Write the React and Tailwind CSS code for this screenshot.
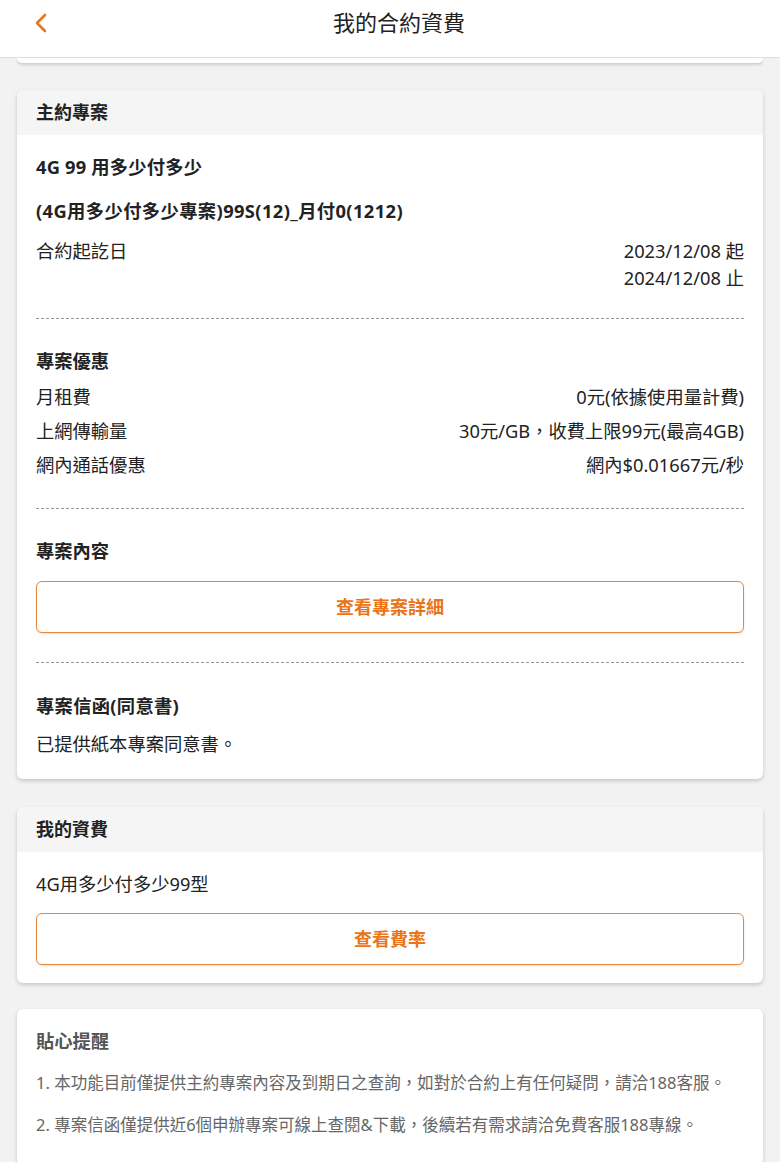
import React from "react";

const font = { fontFamily: '"Noto Sans", "Noto Sans CJK TC", sans-serif' };

const Dashed = ({ className = "" }) => (
  <div className={`border-t border-dashed border-[#9a9a9a] ${className}`} />
);

const OrangeButton = ({ children, className = "" }) => (
  <button
    className={`w-full h-[52px] rounded-md border border-[#e8863a] bg-white text-[18px] font-bold text-[#ea7417] shadow-[0_1px_2px_rgba(0,0,0,0.12)] ${className}`}
  >
    {children}
  </button>
);

const Row = ({ label, value }) => (
  <div className="flex justify-between leading-[27px]">
    <span>{label}</span>
    <span>{value}</span>
  </div>
);

const Card = ({ title, children, className = "" }) => (
  <section
    className={`mx-[17px] bg-white rounded-md overflow-hidden shadow-[0_2px_4px_rgba(0,0,0,0.18)] ${className}`}
  >
    {title && (
      <div className="h-[45px] bg-[#f5f5f5] px-[19px] flex items-center text-[18px] font-bold text-[#222]">
        {title}
      </div>
    )}
    {children}
  </section>
);

export default function App() {
  return (
    <div
      className="min-h-[1162px] bg-[#f2f2f2] text-[18.3px] text-[#222]"
      style={font}
    >
      <header className="h-[58px] bg-white border-b border-[#dedede] relative flex items-center justify-center">
        <button className="absolute left-[32px] top-[11px] w-[18px] h-[24px] flex items-center justify-center">
          <svg width="14" height="20" viewBox="0 0 14 20" fill="none">
            <polyline
              points="11,2 3,10 11,18"
              stroke="#e8761d"
              strokeWidth="2.6"
              strokeLinecap="round"
              strokeLinejoin="round"
            />
          </svg>
        </button>
        <h1 className="text-[22px] text-[#222] -mt-[12px] pl-[18px]">我的合約資費</h1>
      </header>

      <div className="mx-[17px] h-[5px] bg-white rounded-b-md shadow-[0_2px_3px_rgba(0,0,0,0.15)]" />

      <Card title="主約專案" className="mt-[27px]">
        <div className="px-[19px] pt-[18px] pb-[22px] leading-[27px]">
          <p className="font-bold tracking-[0.2px]">4G 99 用多少付多少</p>
          <p className="font-bold mt-[17px] tracking-[0.4px]">(4G用多少付多少專案)99S(12)_月付0(1212)</p>
          <div className="flex justify-between mt-[13px]">
            <span>合約起訖日</span>
            <div className="text-right">
              <p>2023/12/08 起</p>
              <p>2024/12/08 止</p>
            </div>
          </div>
          <Dashed className="mt-[27px]" />

          <p className="font-bold mt-[28px]">專案優惠</p>
          <div className="mt-[9px] flex flex-col gap-[7px]">
            <Row label="月租費" value="0元(依據使用量計費)" />
            <Row label="上網傳輸量" value="30元/GB，收費上限99元(最高4GB)" />
            <Row label="網內通話優惠" value="網內$0.01667元/秒" />
          </div>
          <Dashed className="mt-[30px]" />

          <p className="font-bold mt-[28px]">專案內容</p>
          <OrangeButton className="mt-[17px]">查看專案詳細</OrangeButton>
          <Dashed className="mt-[29px]" />

          <p className="font-bold mt-[29px] tracking-[0.3px]">專案信函(同意書)</p>
          <p className="mt-[11px]">已提供紙本專案同意書。</p>
        </div>
      </Card>

      <Card title="我的資費" className="mt-[28px]">
        <div className="px-[19px] pt-[18px] pb-[18px] leading-[27px]">
          <p>4G用多少付多少99型</p>
          <OrangeButton className="mt-[16px]">查看費率</OrangeButton>
        </div>
      </Card>

      <Card className="mt-[26px]">
        <div className="px-[19px] pt-[18px] pb-[28px]">
          <p className="font-bold text-[#555] leading-[27px]">貼心提醒</p>
          <p className="mt-[17px] text-[16.5px] leading-[24px] text-[#666]">
            1. 本功能目前僅提供主約專案內容及到期日之查詢，如對於合約上有任何疑問，請洽188客服。
          </p>
          <p className="mt-[18px] text-[16.5px] leading-[24px] text-[#666]">
            2. 專案信函僅提供近6個申辦專案可線上查閱&下載，後續若有需求請洽免費客服188專線。
          </p>
        </div>
      </Card>
    </div>
  );
}
